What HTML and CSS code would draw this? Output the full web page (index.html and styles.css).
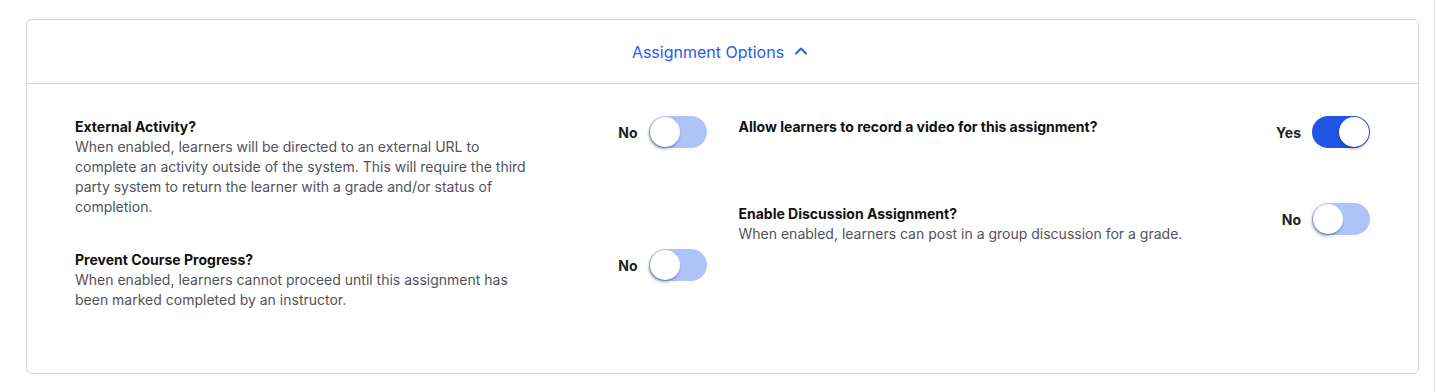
FILE: index.html
```html
<!DOCTYPE html>
<html lang="en">
<head>
  <meta name="viewport" content="width=device-width, initial-scale=1.0">
  <title>Assignment Options</title>
  <link rel="stylesheet" href="styles.css">
</head>
<body>

  <div class="page">
    <div class="options-card">
      <div class="options-header">
        <button class="options-toggle" type="button">
          Assignment Options
          <svg class="chevron" width="14" height="14" viewBox="0 0 14 14" fill="none">
            <path d="M2 9.5 L7 4.5 L12 9.5" stroke="currentColor" stroke-width="2" stroke-linecap="round" stroke-linejoin="round"/>
          </svg>
        </button>
      </div>

      <div class="options-body">
        <div class="options-col">
          <div class="option">
            <div class="option-text">
              <div class="option-title">External Activity?</div>
              <div class="option-desc">When enabled, learners will be directed to an external URL to complete an activity outside of the system. This will require the third party system to return the learner with a grade and/or status of completion.</div>
            </div>
            <div class="option-switch">
              <span class="switch-label">No</span>
              <span class="switch"><span class="knob"></span></span>
            </div>
          </div>

          <div class="option">
            <div class="option-text">
              <div class="option-title">Prevent Course Progress?</div>
              <div class="option-desc">When enabled, learners cannot proceed until this assignment has been marked completed by an instructor.</div>
            </div>
            <div class="option-switch">
              <span class="switch-label">No</span>
              <span class="switch"><span class="knob"></span></span>
            </div>
          </div>
        </div>

        <div class="options-col">
          <div class="option option-tall">
            <div class="option-text">
              <div class="option-title">Allow learners to record a video for this assignment?</div>
            </div>
            <div class="option-switch">
              <span class="switch-label">Yes</span>
              <span class="switch on"><span class="knob"></span></span>
            </div>
          </div>

          <div class="option">
            <div class="option-text">
              <div class="option-title">Enable Discussion Assignment?</div>
              <div class="option-desc">When enabled, learners can post in a group discussion for a grade.</div>
            </div>
            <div class="option-switch">
              <span class="switch-label">No</span>
              <span class="switch"><span class="knob"></span></span>
            </div>
          </div>
        </div>
      </div>
    </div>
  </div>

</body>
</html>
```

FILE: styles.css
```css
body {
  margin: 0;
  padding: 0;
  font-family: Inter, 'Liberation Sans', Arial, sans-serif;
  background-color: #fff;
  color: #111;
}

.page {
  width: 1435px;
  height: 392px;
  box-sizing: border-box;
  padding: 19px 15px 0 26px;
  border-right: 1px solid #e3e5e8;
}

.options-card {
  border: 1px solid #d4d6db;
  border-radius: 6px;
  background-color: #fff;
}

.options-header {
  height: 63px;
  display: flex;
  justify-content: center;
  align-items: center;
  border-bottom: 1px solid #d4d6db;
}

.options-toggle {
  display: flex;
  align-items: center;
  gap: 10px;
  background: none;
  border: none;
  padding: 0;
  margin-right: 5px;
  margin-top: 1px;
  font-family: inherit;
  font-size: 16px;
  color: #2a5be6;
  cursor: pointer;
}

.chevron {
  margin-top: -2px;
}

.options-body {
  display: grid;
  grid-template-columns: 1fr 1fr;
  column-gap: 32px;
  padding: 32px 48px 63px;
}

.options-col {
  display: flex;
  flex-direction: column;
  gap: 32px;
}

.option {
  display: flex;
  align-items: flex-start;
}

.option-tall {
  min-height: 55px;
}

.option-text {
  flex: 0 1 460px;
  padding-top: 1px;
  font-size: 14px;
  line-height: 20px;
}

.option-title {
  font-weight: 700;
  color: #111;
}

.option-desc {
  color: #52525b;
}

.option-switch {
  margin-left: auto;
  display: flex;
  align-items: center;
  gap: 11px;
}

.switch-label {
  font-size: 14px;
  font-weight: 700;
  color: #222;
}

.switch {
  width: 58px;
  height: 32px;
  border-radius: 16px;
  background-color: #aec3f7;
  display: flex;
  align-items: center;
  padding: 1px;
  box-sizing: border-box;
}

.switch.on {
  background-color: #1f56e6;
  justify-content: flex-end;
}

.knob {
  width: 30px;
  height: 30px;
  border-radius: 50%;
  background-color: #fff;
  box-shadow: -1px 2px 3px rgba(30, 40, 90, 0.45);
}
```
